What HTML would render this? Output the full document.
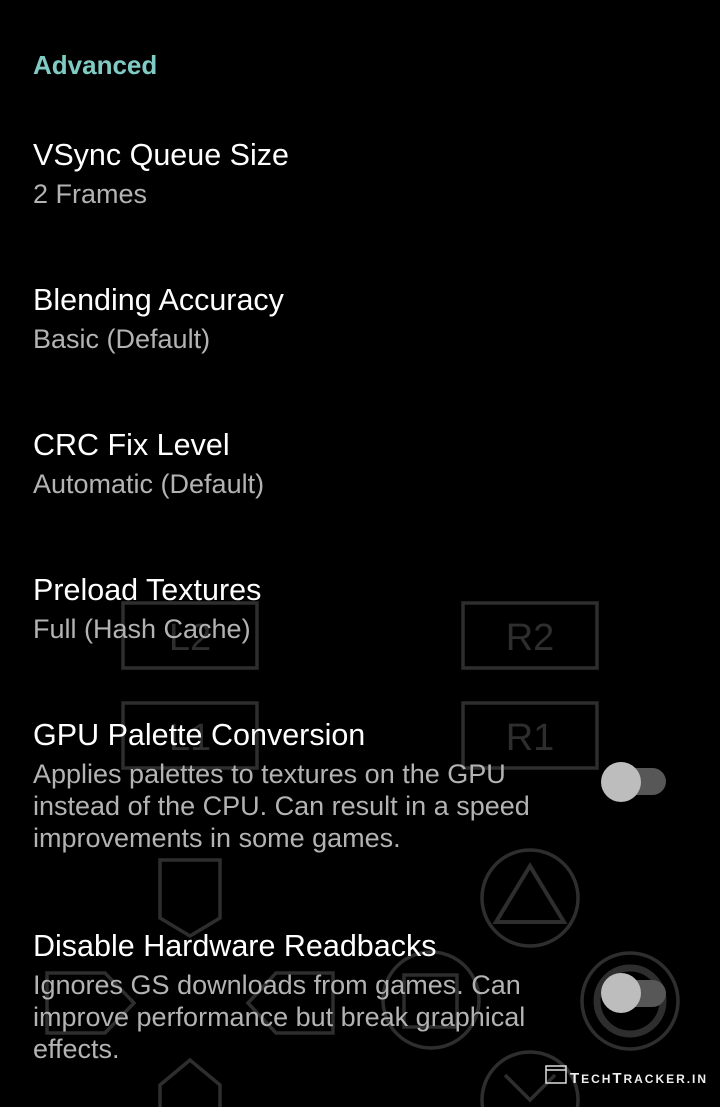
<!DOCTYPE html>
<html><head><meta charset="utf-8"><style>
html,body{margin:0;padding:0;background:#000;width:720px;height:1107px;overflow:hidden}
body{position:relative;font-family:"Liberation Sans",sans-serif}
svg{position:absolute;left:0;top:0}
.t{position:absolute;left:33px;color:#fff;font-size:30.5px;white-space:nowrap;line-height:1}
.s{position:absolute;left:33px;color:#b3b3b3;font-size:27px;white-space:nowrap;line-height:32px}
</style></head><body>
<svg width="720" height="1107" viewBox="0 0 720 1107">
<g fill="none" stroke="#2e2e2e" stroke-width="3.5">
<rect x="123" y="603" width="134" height="65"/>
<rect x="463" y="603" width="134" height="65"/>
<rect x="123" y="703" width="134" height="65"/>
<rect x="463" y="703" width="134" height="65"/>
<path d="M160 860 H220 V918 L190 936 L160 918 Z"/>
<path d="M47 973 H105 L134 1003 L105 1033 H47 Z"/>
<path d="M333 973 H276 L248 1003 L276 1033 H333 Z"/>
<path d="M160 1107 V1085 L190 1060 L220 1085 V1107"/>
<circle cx="530" cy="898" r="48"/>
<path d="M530 866 L496 922 H564 Z" stroke-width="4"/>
<circle cx="431" cy="1000" r="48"/>
<rect x="404" y="975" width="53" height="52"/>
<circle cx="630" cy="1001" r="48"/>
<circle cx="630" cy="1001" r="33" stroke-width="7"/>
<circle cx="530" cy="1100" r="48"/>
<path d="M505 1075 L530 1100 L555 1075"/>
</g>
<g fill="#2e2e2e" font-family="Liberation Sans,sans-serif" font-size="38" text-anchor="middle">
<text x="190" y="650">L2</text><text x="530" y="650">R2</text>
<text x="190" y="750">L1</text><text x="530" y="750">R1</text>
</g>
<rect x="602" y="768" width="64" height="27" rx="13.5" fill="#575757"/>
<circle cx="621" cy="782" r="20" fill="#bdbdbd"/>
<rect x="602" y="980" width="64" height="27" rx="13.5" fill="#575757"/>
<circle cx="621" cy="993" r="20" fill="#bdbdbd"/>
<rect x="546" y="1066" width="20" height="17" fill="none" stroke="#ddd" stroke-width="1.5"/>
<line x1="546" y1="1070" x2="566" y2="1070" stroke="#ddd" stroke-width="1.5"/>
<text x="570" y="1083" fill="#eee" font-family="Liberation Sans,sans-serif" font-weight="bold" font-size="15" letter-spacing="1" textLength="137">T<tspan font-size="12">ECH</tspan>T<tspan font-size="12">RACKER.IN</tspan></text>
</svg>
<div class="t" style="top:52px;color:#80cbc4;font-size:26px;font-weight:bold">Advanced</div>
<div class="t" style="top:140px">VSync Queue Size</div>
<div class="s" style="top:178px">2 Frames</div>
<div class="t" style="top:285px">Blending Accuracy</div>
<div class="s" style="top:323px">Basic (Default)</div>
<div class="t" style="top:430px">CRC Fix Level</div>
<div class="s" style="top:468px">Automatic (Default)</div>
<div class="t" style="top:575px">Preload Textures</div>
<div class="s" style="top:613px">Full (Hash Cache)</div>
<div class="t" style="top:720px">GPU Palette Conversion</div>
<div class="s" style="top:758px">Applies palettes to textures on the GPU<br>instead of the CPU. Can result in a speed<br>improvements in some games.</div>
<div class="t" style="top:931px">Disable Hardware Readbacks</div>
<div class="s" style="top:969px">Ignores GS downloads from games. Can<br>improve performance but break graphical<br>effects.</div>
</body></html>
